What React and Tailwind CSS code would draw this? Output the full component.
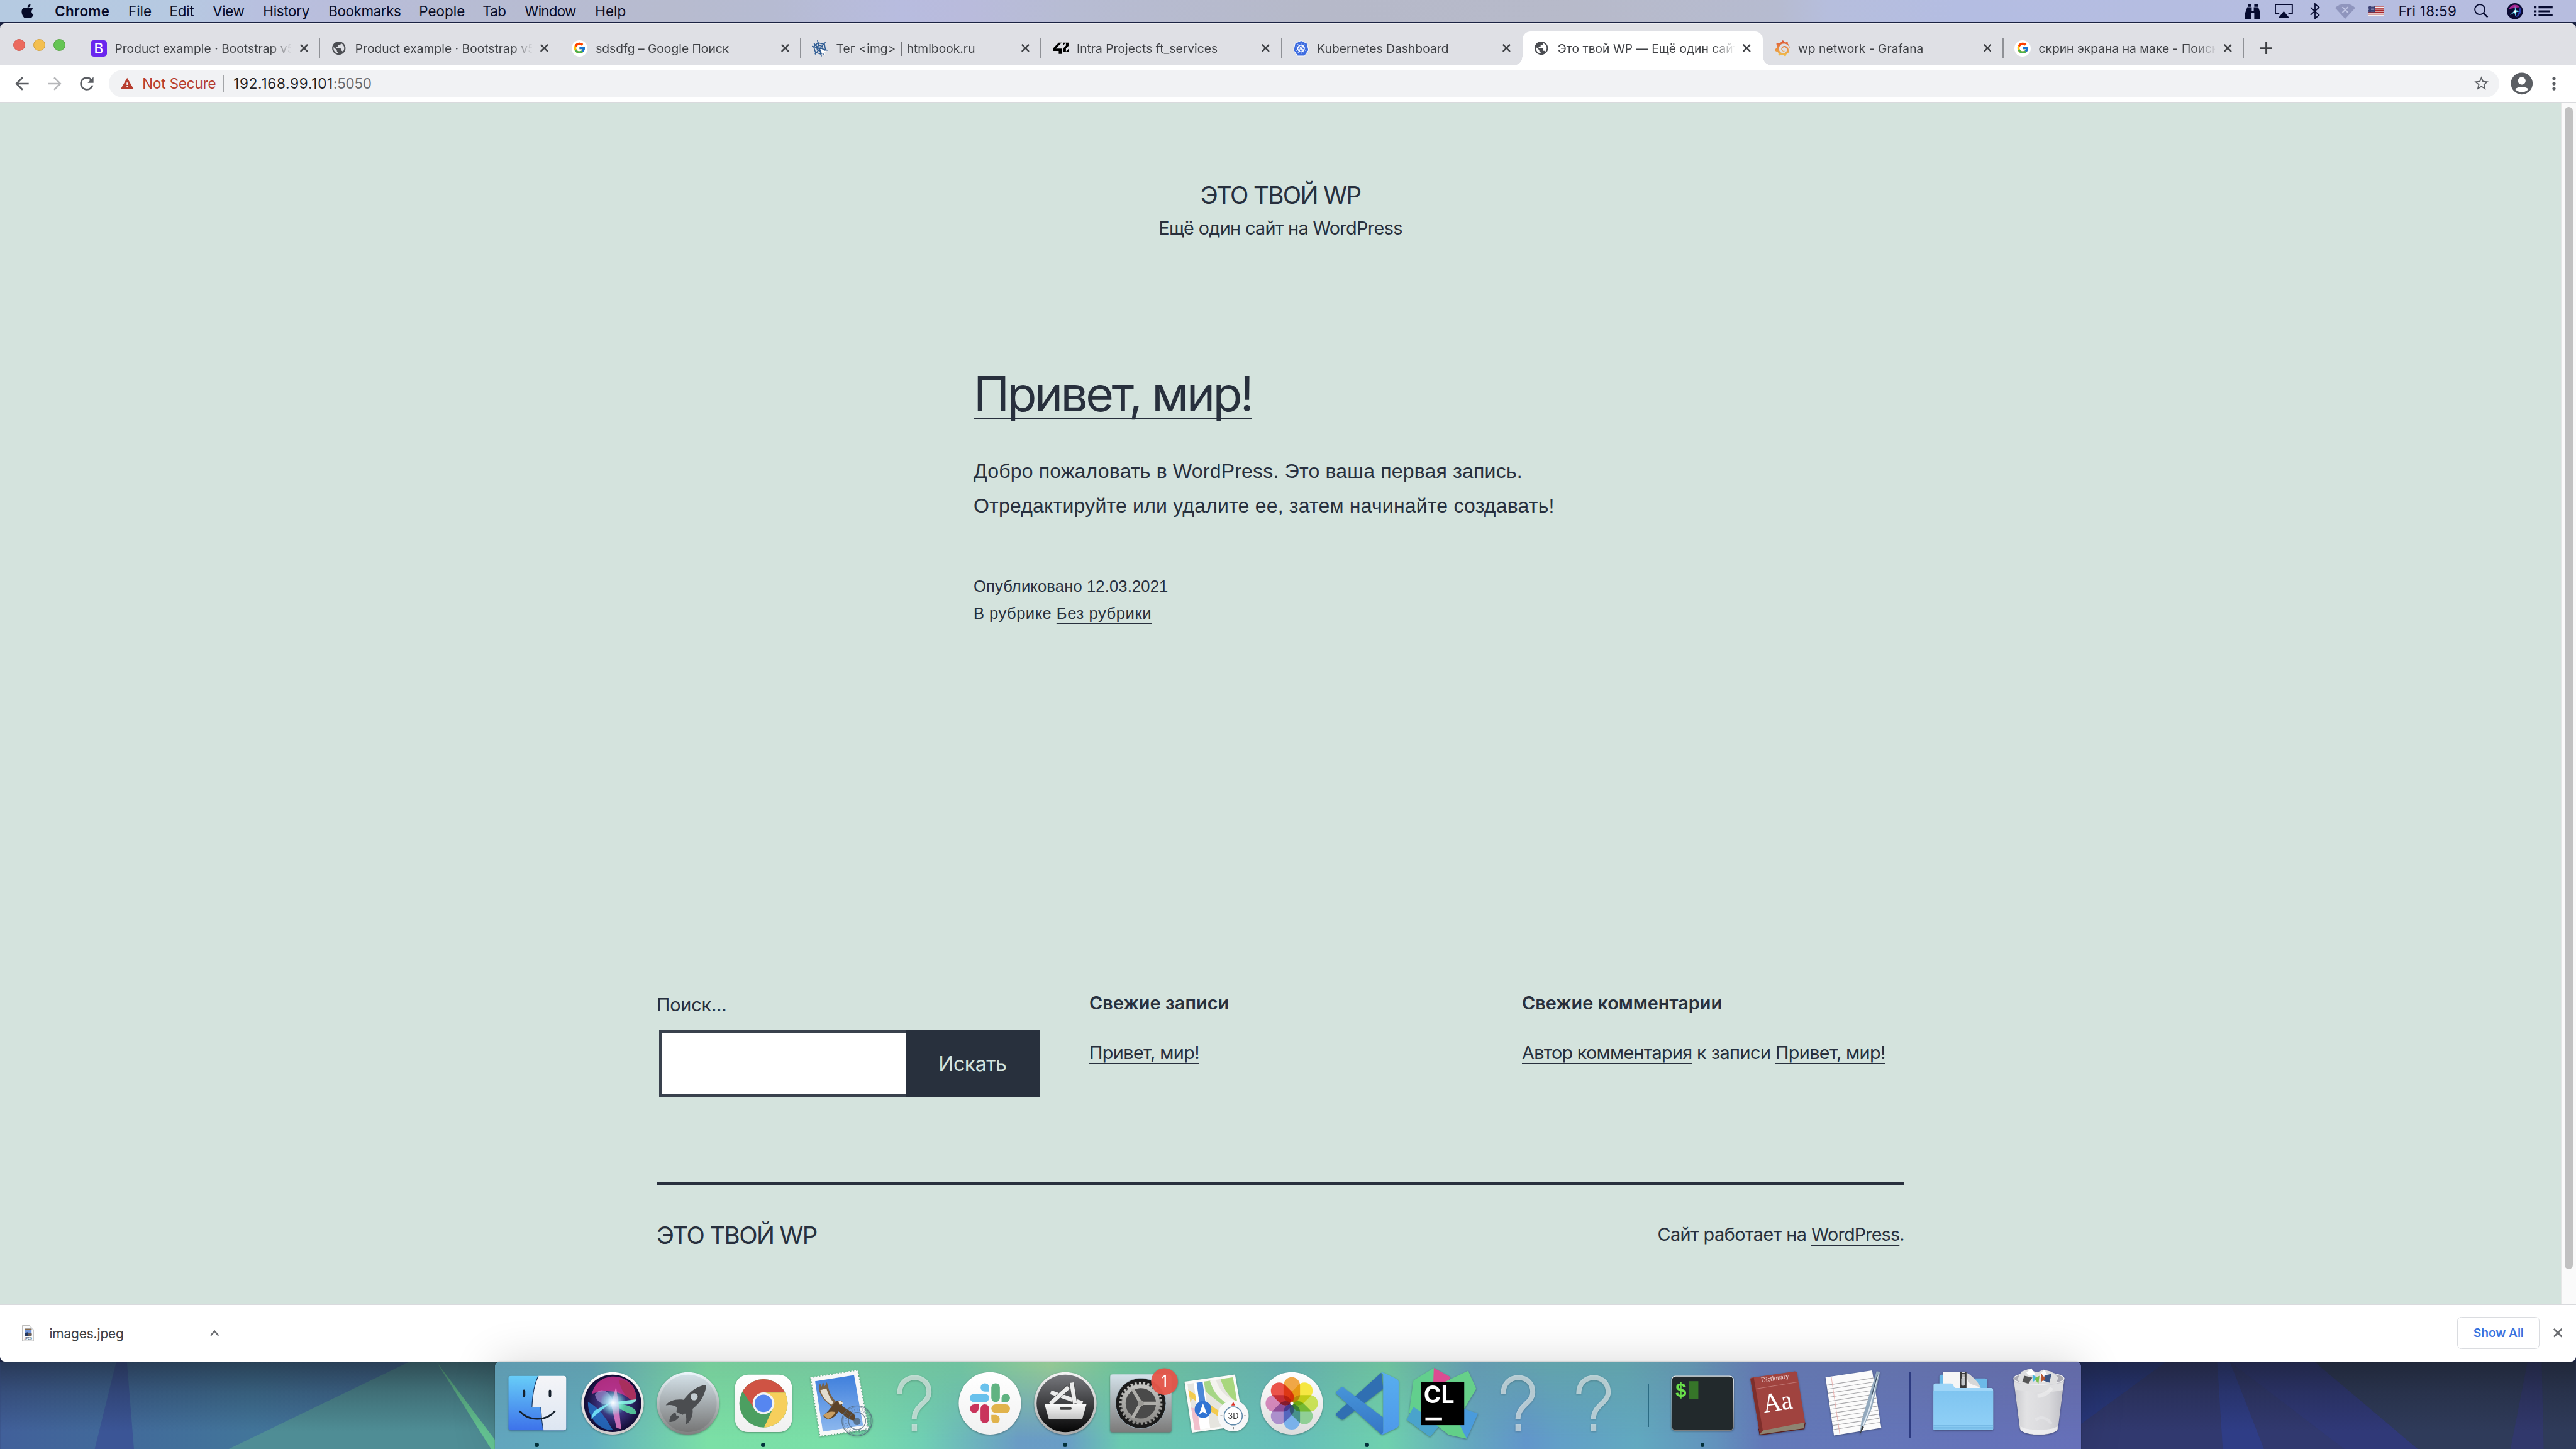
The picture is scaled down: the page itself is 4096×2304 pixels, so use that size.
import React from "react";
import { FaApple } from "react-icons/fa";
import { FcGoogle } from "react-icons/fc";
import { SiKubernetes, SiGrafana, Si42 } from "react-icons/si";
import {
  MdPublic,
  MdWarning,
  MdStarBorder,
  MdAccountCircle,
  MdMoreVert,
  MdArrowBack,
  MdArrowForward,
  MdRefresh,
} from "react-icons/md";

/* ---------- menu bar ---------- */

const MENUS = [
  ["Chrome", "w-[73px] font-semibold tracking-[0.01em]"],
  ["File", "w-[41px]"],
  ["Edit", "w-[43px] tracking-[-0.01em]"],
  ["View", "w-[50px] tracking-[-0.02em]"],
  ["History", "w-[65px] tracking-[-0.014em]"],
  ["Bookmarks", "w-[90px] tracking-[-0.019em]"],
  ["People", "w-[63px]"],
  ["Tab", "w-[42px] tracking-[-0.03em]"],
  ["Window", "w-[70px] tracking-[-0.034em]"],
  ["Help", "w-[40px]"],
];

function SiriOrb({ className }) {
  return (
    <svg viewBox="0 0 16 16" className={className}>
      <circle cx="8" cy="8" r="8" fill="#0c0b33" />
      <path d="M2 6C4 1 10 0 13 4C10 4 6 5 2 6z" fill="#a3228f" />
      <path d="M13 4C16 8 13 13 9 14C12 10 12 7 13 4z" fill="#2a3fb0" />
      <path d="M3 12L8 7L8 2L9 7L14 8L9 9L9 14L7.5 9.5z" fill="#6fe3f5" />
      <circle cx="8.3" cy="8.2" r="1.2" fill="#fff" />
    </svg>
  );
}

function MenuBar() {
  return (
    <header className="flex h-[22px] items-center bg-[linear-gradient(to_right,#b5cae1_0%,#b6c9e1_7%,#b8c0df_10%,#b9bddb_13.5%,#b7bcd4_17%,#b7bbcf_26%,#b6bbd2_30%,#b8bcdf_35%,#b9bbdc_37.5%,#b7bcd3_41.5%,#b6b9c9_51%,#b7baca_61%,#b6bbd0_69%,#b6bedd_71%,#b4bde2_76%,#b7bddf_100%)] text-[14px] text-[#060b28]">
      <FaApple className="ml-[19.5px] mr-[19px] size-[16px]" />
      {MENUS.map(([label, cls]) => (
        <span key={label} className={cls}>
          {label}
        </span>
      ))}
      <div className="ml-auto mr-[23px] flex shrink-0 items-center text-[#060b30]">
        <svg viewBox="0 0 15 15" className="h-[15px] w-[15px] shrink-0" fill="currentColor">
          <path d="M2.5 0h3.5v3h-3.5zM9 0h3.5v3h-3.5zM2 3.4h4.5v4H8.500v-4H13L15 9v6H9V9H6v6H0V9z" />
        </svg>
        <svg viewBox="0 0 18 14" className="ml-[14.5px] h-[14px] w-[18px] shrink-0">
          <path d="M4.500 9.500H.6V.6h16.800v8.900H13.500" fill="none" stroke="currentColor" strokeWidth="1.200" />
          <path d="M9 7.300L14.500 14h-11z" fill="currentColor" />
        </svg>
        <svg viewBox="0 0 10 16" className="ml-[17px] h-[16px] w-[10px] shrink-0" fill="none" stroke="currentColor" strokeWidth="1.100">
          <path d="M.6 4.200L9 11.800L5 15.300V.7L9 4.200L.6 11.800" />
        </svg>
        <svg viewBox="0 0 20 15" className="ml-[15px] h-[15px] w-[20px] shrink-0">
          <path d="M0 4C5.500-1.300 14.500-1.300 20 4L10 15z" fill="#8f95bd" />
          <path d="M7.200 3.200l5.600 5.600M12.800 3.200L7.200 8.800" stroke="#c3c8e6" strokeWidth="1.300" />
        </svg>
        <svg viewBox="0 0 16 11" className="ml-[12.500px] h-[11px] w-[16px] shrink-0">
          <rect width="16" height="11" fill="#f4f0f0" />
          {[0, 2, 4, 6, 8, 10].map((y) => (
            <rect key={y} y={y} width="16" height="1" fill="#a8262c" />
          ))}
          <rect width="7.500" height="6.500" fill="#3b3f74" />
          {[1, 2.500, 4, 5.500].map((y) => (
            <path key={y} d={`M.8 ${y}h6.200`} stroke="#c9cbe0" strokeWidth=".4" strokeDasharray=".5 .7" />
          ))}
        </svg>
        <span className="ml-[14.500px] w-[57px] shrink-0 whitespace-nowrap tracking-[0.012em]">Fri 18:59</span>
        <svg viewBox="0 0 14 14" className="ml-[18.500px] size-[14px] shrink-0" fill="none" stroke="currentColor">
          <circle cx="5.700" cy="5.700" r="5" strokeWidth="1.200" />
          <path d="M9.300 9.300L13.400 13.400" strokeWidth="1.500" />
        </svg>
        <SiriOrb className="ml-[18px] size-[16px] shrink-0" />
        <svg viewBox="0 0 18 10" className="ml-[12px] h-[10px] w-[18px] shrink-0" fill="currentColor">
          <path d="M0 0h2v2H0zM4 0h14v2H4zM0 4h2v2H0zM4 4h11v2H4zM0 8h2v2H0zM4 8h14v2H4z" />
        </svg>
      </div>
    </header>
  );
}

/* ---------- browser tabs ---------- */

function BootstrapIcon() {
  return (
    <span className="flex size-[16px] items-center justify-center rounded-[3px] bg-[#6a26ee] text-[14px] font-medium leading-none text-white">
      B
    </span>
  );
}

function GoogleIcon() {
  return (
    <span className="flex size-[16px] items-center justify-center rounded-full bg-white">
      <FcGoogle className="size-[13px]" />
    </span>
  );
}

function WebIcon() {
  return (
    <svg viewBox="0 0 16 16" className="size-[16px]" fill="none" stroke="#2f5c93" strokeWidth="1">
      <path d="M5.500 0L9.500 16M0 6L15.500 10M13.500 2L3 14M2 3L12 14" />
      <path d="M6 2.500L12.500 4L13.500 9.500L9 13.800L3.500 12L1.800 6.500z" />
      <path d="M6.800 5L10.500 6L11 8.700L8.500 10.800L5.500 9.800L4.600 7z" />
      <path d="M9 8.500l5.500 2.700l-2 .6l.8 2.200l-1.300.4l-.8-2l-1.400 1z" fill="#fff" stroke="none" />
    </svg>
  );
}

function KubeIcon() {
  return (
    <svg viewBox="0 0 16 16" className="size-[16px]">
      <path d="M8 .3L14 3.200L15.500 9.800L11.500 15.600H4.500L.5 9.800L2 3.200z" fill="#3f6de0" stroke="#fff" strokeWidth=".6" />
      <g stroke="#fff" fill="none" strokeWidth=".9">
        <circle cx="8" cy="8.200" r="3.300" />
        <path d="M8 2.700v11M3 6.300l10 4M13 6.300l-10 4M4.700 12.800l6.600-9M11.300 12.800l-6.600-9" strokeWidth=".6" />
      </g>
    </svg>
  );
}

function GrafanaIcon() {
  return (
    <>
      <svg className="absolute size-0">
        <linearGradient id="grafana" x1="0" y1="0" x2="0" y2="1">
          <stop offset="0" stopColor="#dd5335" />
          <stop offset="1" stopColor="#f2c44f" />
        </linearGradient>
      </svg>
      <SiGrafana className="size-[16px]" fill="url(#grafana)" />
    </>
  );
}

const TABS = [
  { icon: <BootstrapIcon />, title: "Product example · Bootstrap v5.0" },
  { icon: <MdPublic className="size-[17px] text-[#4b4d52]" />, title: "Product example · Bootstrap v5.0" },
  { icon: <GoogleIcon />, title: "sdsdfg – Google Поиск" },
  { icon: <WebIcon />, title: "Тег <img> | htmlbook.ru" },
  { icon: <Si42 className="size-[16px] text-black" />, title: "Intra Projects ft_services" },
  { icon: <KubeIcon />, title: "Kubernetes Dashboard", plain: true },
  { icon: <MdPublic className="size-[17px] text-[#4b4d52]" />, title: "Это твой WP — Ещё один сайт", active: true },
  { icon: <GrafanaIcon />, title: "wp network - Grafana" },
  { icon: <GoogleIcon />, title: "скрин экрана на маке - Поиск" },
];

function Cross({ className }) {
  return (
    <svg viewBox="0 0 8 8" className={className} fill="none" stroke="currentColor" strokeWidth="1.500">
      <path d="M.5.5L7.500 7.500M7.500.5L.5 7.500" />
    </svg>
  );
}

function Tab({ icon, title, active, plain }) {
  return (
    <div
      className={
        active
          ? "relative flex h-[34px] w-[239px] items-center rounded-t-[8px] bg-white pl-[11px]"
          : "flex h-[34px] w-[239px] items-center pl-[11px]"
      }
    >
      {active && (
        <>
          <i className="absolute bottom-0 left-[-8px] size-[8px] bg-[radial-gradient(circle_at_0_0,#dfe0e5_7.500px,#fff_8px)]" />
          <i className="absolute bottom-0 right-[-8px] size-[8px] bg-[radial-gradient(circle_at_100%_0,#dfe0e5_7.500px,#fff_8px)]" />
        </>
      )}
      <span className="flex w-[16px] shrink-0 justify-center">{icon}</span>
      <span className="ml-[8px] w-[175.500px] overflow-hidden whitespace-nowrap pt-px text-[12px] leading-[16px] tracking-[0.002em] text-[#3f4145] [mask-image:linear-gradient(to_right,black_154px,transparent_177px)]">
        {title}
      </span>
      <Cross className="ml-[8.500px] size-[8px] text-[#3f4145]" />
      {!active && !plain && <i className="ml-auto h-[20px] w-px bg-[#8f9196]" />}
    </div>
  );
}

function TabStrip() {
  return (
    <div className="flex h-[42px] items-end rounded-t-[5px] border-t border-[#ededf0] bg-[#dfe0e5]">
      <div className="flex h-[34px] w-[79px] items-start gap-[8px] pl-[13px] pt-[7.500px]">
        <i className="size-[12px] rounded-full border-[0.500px] border-[#d05a50] bg-[#eb6a5e]" />
        <i className="size-[12px] rounded-full border-[0.500px] border-[#d3a13e] bg-[#f3bf4f]" />
        <i className="size-[12px] rounded-full border-[0.500px] border-[#57a544] bg-[#65c554]" />
      </div>
      {TABS.map((t, i) => (
        <Tab key={i} {...t} />
      ))}
      <div className="flex h-[34px] items-center pl-[16px]">
        <svg viewBox="0 0 12 12" className="size-[12px]" stroke="#3c3e42" strokeWidth="1.800">
          <path d="M6 0v12M0 6h12" />
        </svg>
      </div>
    </div>
  );
}

function Toolbar() {
  return (
    <div className="flex h-[37px] items-center border-b border-[#d9dadd] bg-white pl-[12px] text-[#5b5e63]">
      <MdArrowBack className="size-[20px]" />
      <MdArrowForward className="ml-[12.500px] size-[20px] text-[#b6b7ba]" />
      <MdRefresh className="ml-[11.500px] size-[20px]" />
      <div className="ml-[12px] flex h-[28px] w-[2376px] items-center rounded-full bg-[#f1f2f4] text-[14px]">
        <MdWarning className="ml-[11.500px] size-[14px] text-[#b73d2e]" />
        <span className="ml-[8px] w-[80px] tracking-[-0.006em] text-[#b73d2e]">Not Secure</span>
        <i className="h-[16px] w-px bg-[#a3a5a8]" />
        <span className="ml-[9.500px] tracking-[0.035em] text-[#1f2024]">192.168.99.101</span>
        <span className="tracking-[-0.01em] text-[#686b70]">:5050</span>
        <MdStarBorder className="ml-auto mr-[9.500px] size-[17px]" />
      </div>
      <MdAccountCircle className="ml-[9px] size-[26px]" />
      <MdMoreVert className="ml-[9px] size-[20px]" />
    </div>
  );
}

/* ---------- page ---------- */

function Link({ children, className = "" }) {
  return (
    <a
      className={`underline decoration-[1px] underline-offset-[4px] [text-decoration-skip-ink:none] ${className}`}
    >
      {children}
    </a>
  );
}

function Page() {
  return (
    <div className="flex h-[1194px] bg-[#d4e3dd] text-[#28303d]">
      <main className="flex flex-1 flex-col items-center pt-[74px]">
        <h1 className="text-[24px] leading-[36px] tracking-[-0.041em]">ЭТО ТВОЙ WP</h1>
        <p className="text-[18px] leading-[30px] tracking-[-0.0225em]">Ещё один сайт на WordPress</p>

        <article className="mt-[118.500px] w-[610px]">
          <h2 className="text-[48px] leading-[62px] tracking-[-0.0475em]">
            <a className="underline decoration-[1.500px] underline-offset-[7px] [text-decoration-skip-ink:none]">
              Привет, мир!
            </a>
          </h2>
          <p className="mt-[29px] whitespace-nowrap font-['Liberation_Sans',sans-serif] text-[20px] leading-[34px] tracking-[0.0062em]">
            Добро пожаловать в WordPress. Это ваша первая запись.
            <br />
            Отредактируйте или удалите ее, затем начинайте создавать!
          </p>
          <div className="mt-[49.700px] font-['Liberation_Sans',sans-serif] text-[16px] leading-[27.250px] tracking-[0.005em]">
            <p>Опубликовано 12.03.2021</p>
            <p className="tracking-[0.018em]">
              В рубрике <Link className="tracking-[0.022em]">Без рубрики</Link>
            </p>
          </div>
        </article>

        <footer className="mt-[357px] w-[1240px] text-[18px]">
          <div className="flex h-[194.500px] gap-[50px]">
            <div className="w-[380px]">
              <p className="mt-[3.200px] leading-[30px] tracking-[-0.006em]">Поиск...</p>
              <div className="ml-[2.500px] mt-[10px] flex h-[66px] w-[378px]">
                <div className="flex-1 border-[3px] border-r-0 border-[#39414d] bg-white" />
                <button className="w-[133px] bg-[#28303d] pt-[1px] text-[20px] tracking-[-0.014em] text-[#d4e3dd]">Искать</button>
              </div>
            </div>
            <div className="w-[380px]">
              <h3 className="mt-[1.500px] font-semibold leading-[30px] tracking-[0.003em]">Свежие записи</h3>
              <p className="mt-[19px] leading-[30px]">
                <Link className="tracking-[-0.021em]">Привет, мир!</Link>
              </p>
            </div>
            <div className="w-[380px] whitespace-nowrap">
              <h3 className="mt-[1.500px] font-semibold leading-[30px]">Свежие комментарии</h3>
              <p className="mt-[19px] leading-[30px] tracking-[-0.018em]">
                <Link className="tracking-[-0.025em]">Автор комментария</Link> к записи{" "}
                <Link className="tracking-[-0.022em]">Привет, мир!</Link>
              </p>
            </div>
          </div>
          <div className="flex justify-between border-t-[3px] border-[#28303d] pt-[32.500px]">
            <p className="text-[24px] leading-[36px] tracking-[-0.041em]">ЭТО ТВОЙ WP</p>
            <p className="leading-[34px] tracking-[-0.018em]">
              Сайт работает на <Link className="tracking-[-0.0304em]">WordPress</Link>.
            </p>
          </div>
        </footer>
      </main>
      <aside className="w-[15px] border-l border-[#e6e6e6] bg-[#fafafa] pl-[3px] pt-[4px]">
        <div className="h-[1155px] w-[8px] rounded-full bg-[#c1c1c1]" />
      </aside>
    </div>
  );
}

/* ---------- download shelf ---------- */

function JpegIcon() {
  return (
    <svg viewBox="0 0 12 16" className="h-[16px] w-[12px]">
      <path d="M.3.3H7.500L11.700 4.700V15.700H.3z" fill="#fbfbfb" stroke="#b9b9b9" strokeWidth=".6" />
      <path d="M7.500.3V4.700H11.700z" fill="#dcdcdc" />
      <rect x="2.500" y="3.500" width="7" height="7.500" fill="#6f93d8" />
      <path d="M2.500 3.500h7v1.500h-7z" fill="#8a6a45" />
      <path d="M2.500 11V8l3-1l4 4z" fill="#20355f" />
      <circle cx="8" cy="9.300" r="1.800" fill="#6b5d55" />
      <text x="6" y="14.600" fontSize="3" textAnchor="middle" fill="#444">
        JPEG
      </text>
    </svg>
  );
}

function Shelf() {
  return (
    <div className="flex h-[57px] items-center rounded-b-[5px] border-t border-[#d9dadd] bg-white pl-[22px]">
      <JpegIcon />
      <span className="ml-[15px] w-[159.500px] pt-[1.500px] text-[13px] tracking-[-0.0045em] text-[#3c4043]">images.jpeg</span>
      <svg viewBox="0 0 9 6" className="h-[6px] w-[9px]" fill="none" stroke="#6a6c70" strokeWidth="1.500">
        <path d="M.6 5.400L4.500 1L8.400 5.400" />
      </svg>
      <i className="ml-[18.500px] h-[44px] w-px bg-[#c8c9cb]" />
      <button className="ml-auto h-[32px] w-[82px] rounded-[4px] border border-[#dadce0] text-[12px] font-semibold tracking-[-0.004em] text-[#3a73df]">
        Show All
      </button>
      <Cross className="ml-[13.500px] mr-[13.500px] size-[9px] text-[#6a6c70]" />
    </div>
  );
}

/* ---------- desktop behind the dock ---------- */

function Wallpaper() {
  return (
    <svg viewBox="0 0 2560 87" className="absolute bottom-0 left-0 h-[87px] w-[2560px]">
      <defs>
        <linearGradient id="wpShade" x1="0" y1="0" x2="0" y2="1">
          <stop offset="0" stopColor="#14171f" stopOpacity=".55" />
          <stop offset=".35" stopColor="#14171f" stopOpacity=".25" />
          <stop offset=".8" stopColor="#14171f" stopOpacity="0" />
        </linearGradient>
        <linearGradient id="wpLeft" x1="0" y1="0" x2="1" y2="0">
          <stop offset="0" stopColor="#41609a" />
          <stop offset=".5" stopColor="#42759a" />
          <stop offset="1" stopColor="#466a9a" />
        </linearGradient>
      </defs>
      <rect width="2560" height="87" fill="#31396f" />
      <rect width="500" height="87" fill="url(#wpLeft)" />
      <path d="M115.500 0H126L133 87H94z" fill="#3b5596" />
      <path d="M407 0H500V87H227z" fill="#4f8d95" />
      <path d="M433.500 0L492 78V87H488z" fill="#66c795" />
      <path d="M2060 0H2153L2060 68z" fill="#2a3a83" />
      <path d="M2203.500 0H2216L2250 87H2209z" fill="#2f3d86" />
      <path d="M2216 0H2300L2403 87H2330z" fill="#303978" />
      <path d="M2300 0H2560V87H2403z" fill="#2f3b5a" />
      <path d="M2512 0H2526L2528 87H2495z" fill="#31386c" />
      <rect width="2560" height="87" fill="url(#wpShade)" />
    </svg>
  );
}

/* ---------- dock icons ---------- */

function Ico({ children }) {
  return (
    <svg viewBox="0 0 75 87" className="h-[87px] w-[75px] shrink-0 drop-shadow-[0_1px_1px_rgba(0,0,0,0.350)]">
      {children}
    </svg>
  );
}

function Grad({ id, from, to }) {
  return (
    <linearGradient id={id} x1="0" y1="0" x2="0" y2="1">
      <stop offset="0" stopColor={from} />
      <stop offset="1" stopColor={to} />
    </linearGradient>
  );
}

const Finder = () => (
  <Ico>
    <Grad id="fa" from="#67cdf8" to="#3d72ea" />
    <Grad id="fb" from="#f5f5f8" to="#dde6f2" />
    <rect x="9" y="14.200" width="57.400" height="54.100" rx="2.500" fill="url(#fa)" />
    <path d="M38.700 14.200H64a2.400 2.400 0 0 1 2.400 2.400V65.900a2.400 2.400 0 0 1-2.400 2.400H43.600C42.300 61 41.500 53 41.200 45.300H32.400C32.800 33 34.500 23 38.700 14.200z" fill="url(#fb)" />
    <path d="M38.700 14.200C34.500 23 32.800 33 32.400 45.300H41.200C41.500 53 42.300 61 43.600 68.300" fill="none" stroke="#1b3a63" strokeWidth=".7" />
    <path d="M24.500 29v5M50.300 29v5" stroke="#15202c" strokeWidth="2.500" strokeLinecap="round" />
    <path d="M20.500 49.500C29 59.500 46.500 59.500 55 49.500" fill="none" stroke="#15202c" strokeWidth="1.700" strokeLinecap="round" />
  </Ico>
);

const Siri = () => (
  <Ico>
    <radialGradient id="sg">
      <stop offset="0" stopColor="#4a6fb4" />
      <stop offset=".55" stopColor="#352b72" />
      <stop offset="1" stopColor="#120c34" />
    </radialGradient>
    <radialGradient id="sw">
      <stop offset="0" stopColor="#fff" />
      <stop offset=".35" stopColor="#c8f2ff" stopOpacity=".8" />
      <stop offset="1" stopColor="#6fd" stopOpacity="0" />
    </radialGradient>
    <Grad id="sr" from="#ffffff" to="#cfcaca" />
    <circle cx="37.500" cy="41.500" r="31" fill="url(#sr)" />
    <circle cx="37.500" cy="41.500" r="28.500" fill="url(#sg)" />
    <path d="M17 32C22 11 48 10 58 25C64 37 60 42 56 38C46 29 30 27 17 32z" fill="#c8338c" opacity=".85" />
    <path d="M44 18C58 18 63 34 60 40C52 38 45 28 44 18z" fill="#a63054" opacity=".8" />
    <path d="M13 40C13 60 28 69 38 68C32 60 28 48 13 40z" fill="#2470c4" opacity=".85" />
    <path d="M20 33C27 22 38 33 38 42C30 44 22 42 20 33z" fill="#c7b4f2" opacity=".5" />
    <path d="M37.500 40.500L61 37.500C61 43 48 44 37.500 41z" fill="#8af7e6" opacity=".9" />
    <path d="M38 42C48 41 63 46 61 52C56 54 46 48 38 42z" fill="#5adaa2" opacity=".85" />
    <path d="M36 42L41 25L43.500 42L46 67L41.500 66z" fill="#f283cd" opacity=".8" />
    <path d="M38 39L16 57L19 49z" fill="#74e8f8" opacity=".9" />
    <circle cx="38" cy="41" r="13" fill="url(#sw)" />
  </Ico>
);

const Launchpad = () => (
  <Ico>
    <Grad id="la" from="#ecf6fb" to="#7f7f7f" />
    <Grad id="lb" from="#d3e0e7" to="#767676" />
    <circle cx="37.500" cy="41.500" r="31" fill="url(#la)" />
    <circle cx="37.500" cy="41.500" r="28.500" fill="url(#lb)" />
    <path d="M55.700 23C48 24 41 28.500 36 34.500L33 38C26 37 19 38.500 15.400 43.500C20 42.500 24 43.500 26.500 45.500L26 50L32 53L34.500 51.500C36 54 36.200 58.500 35.200 63C39.500 60 43 54 42 47C49 42 55 33 55.700 23z" fill="#4b4d50" />
    <circle cx="43.600" cy="35" r="3.900" fill="#c3ccd1" stroke="#333" strokeWidth=".5" />
    <path d="M25 50.500C20.500 52 19 56 19 60C23 60 27 58.500 28.500 54.500L26 54z" fill="#4b4d50" />
  </Ico>
);

const Chrome = () => (
  <Ico>
    <Grad id="ca" from="#ffffff" to="#f0f0f0" />
    <clipPath id="cc">
      <circle cx="37.500" cy="41.500" r="24" />
    </clipPath>
    <rect x="9.100" y="13" width="56.800" height="57" rx="13" fill="url(#ca)" />
    <g clipPath="url(#cc)">
      <rect x="13" y="17" width="49" height="49" fill="#4c9f61" />
      <path d="M16.700 29.500L10 10H65V30.800H37.500L28.200 46.800z" fill="#cf5344" />
      <path d="M37.500 30.800H65V70H36L46.800 46.800z" fill="#f6cf5c" />
    </g>
    <circle cx="37.500" cy="41.500" r="10.800" fill="#f3f3f3" />
    <circle cx="37.500" cy="41.500" r="8.700" fill="#5686f0" />
  </Ico>
);

const Mail = () => (
  <Ico>
    <Grad id="ma" from="#3f7fdc" to="#8db8ee" />
    <path d="M9.900 16.200L55.800 9L66.400 66.700L19 73.700z" fill="#f8f8f8" stroke="#f8f8f8" strokeWidth="1.600" strokeDasharray="1.700 1.400" />
    <path d="M13.800 19.500L52.500 13.500L61.500 63.500L21.500 69.500z" fill="url(#ma)" />
    <path d="M17.500 28L18.500 21.500L20.500 25L21.500 20L23.500 24.500L25.500 20.500L27.500 28C29 33 31 36 34.500 40L31 45C26 42 20 36 17.500 28z" fill="#7a6247" />
    <path d="M19 28.500L25 26.500C27 33 29 37 32 40.500L30 43C25 40 21 35 19 28.500z" fill="#e2dccf" />
    <path d="M33 41C36 38 39 38 41 40L40.500 44C44 47 50 49 53 53L54 58.500C50 59 46 57 42 53L37 49.500C35 54 31 56.500 26.500 57.500L21.500 54C25 51 28 48 30 45z" fill="#5c4329" />
    <path d="M22 53.500C26 50 29 49 34 50C32 54 29.500 56 26.500 57z" fill="#c99e62" />
    <path d="M37 39.500C39 38.500 41 39.500 41.500 42L38 43z" fill="#efe6d5" />
    <g fill="none" stroke="#52677c" strokeWidth=".9" opacity=".75">
      <circle cx="55.500" cy="59" r="15" />
      <circle cx="55.500" cy="59" r="13.800" strokeWidth=".4" />
      <circle cx="55.500" cy="59" r="8.500" />
      <circle cx="55.500" cy="59" r="11.300" strokeWidth="2.400" strokeDasharray=".8 1.700" opacity=".6" />
    </g>
    <ellipse cx="55.500" cy="59.500" rx="3.400" ry="3.700" fill="#52677c" opacity=".85" />
  </Ico>
);

const Question = () => (
  <Ico>
    <g opacity=".62">
      <path d="M22.700 32C22.700 22 29 15.900 37.700 15.900C46.500 15.900 52 22 52 30.500C52 41 37.300 43.500 37.300 57" fill="none" stroke="#f5f8f8" strokeWidth="5" />
      <rect x="34.800" y="62" width="5.300" height="7.200" fill="#f0f5f5" />
    </g>
  </Ico>
);

const Slack = () => (
  <Ico>
    <Grad id="sl" from="#ffffff" to="#f1f1f1" />
    <circle cx="37.500" cy="41.500" r="31" fill="url(#sl)" />
    <g fill="#69c1ec">
      <path d="M36.800 29.800h-4.300a4.300 4.150 0 1 1 4.300-4.150z" />
      <rect x="17.500" y="32" width="19.300" height="8.300" rx="4.150" />
    </g>
    <g fill="#60b381">
      <rect x="38.900" y="21.500" width="8.500" height="18.800" rx="4.200" />
      <path d="M49.100 40.300v-4.150a4.200 4.150 0 1 1 4.200 4.150z" />
    </g>
    <g fill="#c9345b">
      <path d="M26.300 42.500v4.200a4.300 4.200 0 1 1-4.300-4.200z" />
      <rect x="28.200" y="42.500" width="8.600" height="18.700" rx="4.200" />
    </g>
    <g fill="#e1b34c">
      <rect x="38.900" y="42.500" width="18.600" height="8.400" rx="4.200" />
      <path d="M38.900 53h4.200a4.200 4.150 0 1 1-4.200 4.150z" />
    </g>
  </Ico>
);

const AppCatalog = () => (
  <Ico>
    <Grad id="aa" from="#f4f4f4" to="#a9a9a9" />
    <Grad id="ab" from="#77787d" to="#050505" />
    <Grad id="ac" from="#fafafa" to="#c3c3c3" />
    <circle cx="37.500" cy="41.500" r="31" fill="url(#aa)" />
    <circle cx="37.500" cy="41.500" r="28.600" fill="url(#ab)" />
    <g stroke="#ececec" strokeWidth="4" fill="none">
      <path d="M23 30.500L54.500 41.500" />
      <path d="M22.500 42L40.500 25.500" stroke="#444" strokeWidth="5" />
      <path d="M22.500 42L40.500 25.500" />
      <path d="M43.700 21L47 41.500" stroke="#444" strokeWidth="5" />
      <path d="M43.700 21L47 41.500" />
    </g>
    <path d="M16.800 42.300H58.500L54.300 57H21z" fill="url(#ac)" />
    <rect x="31.900" y="45.400" width="11.800" height="2.500" rx="1.200" fill="#444" />
  </Ico>
);

const Settings = () => (
  <Ico>
    <Grad id="ga" from="#d4e2ea" to="#7b7a79" />
    <Grad id="gb" from="#c3c3c0" to="#8f8e8b" />
    <rect x="7" y="12.700" width="61" height="57.600" rx="2.500" fill="url(#ga)" />
    <circle cx="37.500" cy="41.500" r="25" fill="#1b1b1b" stroke="#9fb1bd" strokeWidth=".6" />
    <circle cx="37.500" cy="41.500" r="20" fill="#4a4a4a" stroke="url(#gb)" strokeWidth="3" strokeDasharray="2.100 2.090" />
    <circle cx="37.500" cy="41.500" r="17" fill="none" stroke="url(#gb)" strokeWidth="3.800" />
    <g stroke="#aeada9" strokeWidth="3.200">
      <path d="M37.500 41.500H54M37.500 41.500L29.300 27.200M37.500 41.500L29.300 55.800" />
    </g>
    <circle cx="37.500" cy="41.500" r="3" fill="#9a9995" />
    <circle cx="61" cy="19.800" r="13.300" fill="#e5564a" fillOpacity=".96" />
    <text x="60.700" y="25.200" fontSize="15.500" textAnchor="middle" fill="#fff">
      1
    </text>
  </Ico>
);

const Maps = () => (
  <Ico>
    <clipPath id="mp">
      <path d="M8.800 22.300L54 15.700L62 62L16 68.200z" />
    </clipPath>
    <path d="M5.900 20L56.100 12.800L65 63.500L13.300 70.700z" fill="#fafaf8" />
    <g clipPath="url(#mp)">
      <rect width="75" height="87" fill="#e6e5df" />
      <path d="M40 10H70V45C56 42 44 32 40 10z" fill="#a9d77e" />
      <path d="M27 30L60 56V44C44 40 34 30 30 12L24 14z" fill="#9fd47c" opacity=".9" />
      <path d="M33 14C36 30 46 40 62 44" fill="none" stroke="#f4f3ee" strokeWidth="6" />
      <path d="M5 44L22 48V75H5z" fill="#f1bfcb" />
      <path d="M0 24L14 36L8 48z" fill="#e9d27d" />
      <path d="M4 27L60 66" stroke="#f3cb4f" strokeWidth="5" />
      <path d="M19 14L28 78" stroke="#fff" strokeWidth="10" />
      <path d="M20 14L25.500 54" stroke="#4a86d8" strokeWidth="6" />
    </g>
    <circle cx="24.300" cy="47.500" r="8.300" fill="#3174d3" />
    <path d="M24.300 41.500L28.300 52.500L24.300 50L20.300 52.500z" fill="#fff" />
    <circle cx="54.300" cy="54" r="15.400" fill="#f6f7f8" />
    <circle cx="54.300" cy="54" r="9" fill="#fff" stroke="#5d87a8" strokeWidth="1" />
    <path d="M54.300 40L56.200 43.600H52.400z" fill="#d9352a" />
    <path d="M41.500 54h2M65 54h2M54.300 65v2" stroke="#333" strokeWidth=".8" />
    <text x="54.300" y="57" fontSize="8" textAnchor="middle" fill="#333">
      3D
    </text>
  </Ico>
);

const PETALS = ["#efa23c", "#f6e638", "#c6df4e", "#8bcd90", "#74aeea", "#a98bca", "#d182b6", "#ea4a40"];
const Photos = () => (
  <Ico>
    <Grad id="pa" from="#ffffff" to="#dcdcdc" />
    <circle cx="37.500" cy="41.500" r="31" fill="url(#pa)" />
    <g className="isolate">
      {PETALS.map((c, i) => (
        <rect key={c} x="29.300" y="15.500" width="16.400" height="25.500" rx="8.200" fill={c} fillOpacity=".95" className="mix-blend-multiply" transform={`rotate(${i * 45} 37.500 41.500)`} />
      ))}
    </g>
    <circle cx="37.500" cy="41.500" r="1.600" fill="#fff" />
  </Ico>
);

const VSCode = () => (
  <Ico>
    <Grad id="va" from="#58aeee" to="#4e99ea" />
    <Grad id="vb" from="#4794d8" to="#3576c6" />
    <path d="M51.500 11L6.900 51.200C6.300 52 6.300 53 6.900 53.700L11.500 57.400C12.300 58 13.200 57.900 14 57.300L53.300 27z" fill="#306fb2" />
    <path d="M14 25.800C13.200 25.200 12.300 25.200 11.500 25.800L6.900 29.800C6.300 30.500 6.300 31.500 6.900 32.200L51 72L53.300 72.300V55.500z" fill="url(#vb)" />
    <path d="M51.200 11C52 10.600 53 10.700 54 11.100L66.800 17.300C68 18 68.700 19 68.700 20.300V62.800C68.700 64 68 65.200 66.800 65.800L54 72C53 72.400 52 72.400 51 72C52.500 72 53.300 71 53.300 69.500V13.500C53.300 12 52.500 11.200 51.200 11z" fill="url(#va)" />
  </Ico>
);

const CLion = () => (
  <Ico>
    <path d="M8.400 18.700L28.700 6.200L30 40L16 64L4.200 50.300z" fill="#62cf8d" />
    <path d="M28.700 6.200L45.200 15.300L41 24H28z" fill="#dd4c92" />
    <path d="M40 20L62.800 9L70.800 27L58.900 47L45 44z" fill="#66d089" />
    <path d="M1.700 57.800L8.400 45L34.700 63.200L24.900 74.800z" fill="#4aa3cc" />
    <path d="M31.200 63.200L43.500 72.800L61.400 76.700L64 58L50 55z" fill="#62cf88" />
    <path d="M58.900 47L72.500 51.700L61.400 76.700L54 62z" fill="#4a9bdc" />
    <rect x="15.800" y="20" width="43.100" height="43.200" fill="#000" />
    <text x="18.600" y="41.500" fontSize="23.500" fontWeight="700" fill="#fff" textLength="30.500" lengthAdjust="spacingAndGlyphs">
      CL
    </text>
    <rect x="20.300" y="55.500" width="16.500" height="2.900" fill="#fff" />
  </Ico>
);

const Terminal = () => (
  <Ico>
    <Grad id="ta" from="#e9eef0" to="#7d7d7d" />
    <rect x="6.600" y="14" width="62.100" height="54.800" rx="4" fill="url(#ta)" />
    <rect x="7.400" y="14.800" width="60.500" height="53.300" rx="3.400" fill="#22292c" />
    <text x="10.300" y="35" fontSize="19.500" fontWeight="700" fill="#6be24b" className="font-['Liberation_Mono',monospace]">
      $
    </text>
    <rect x="24.200" y="19.500" width="9.200" height="18" fill="#367529" />
  </Ico>
);

const Dictionary = () => (
  <Ico>
    <path d="M18.500 67L62.500 59L64.500 61L63.500 66.700L19.600 72.800z" fill="#8d8471" stroke="#5c1e1c" strokeWidth=".8" />
    <path d="M10.100 17.500C10.100 16.500 10.600 16.100 11.500 16L53.500 9.800C55 9.600 56.200 10.200 56.500 11.500L64.500 60.500L19.200 69z" fill="#a0433f" />
    <path d="M10.100 17L13.500 16L22.500 68.500L19.600 72z" fill="#7e2f2c" />
    <path d="M14.800 27.300L57.800 20.200" stroke="#c98582" strokeWidth=".5" />
    <g transform="matrix(.985 -.150 .160 .985 0 0)" fill="#fff" className="font-['Liberation_Serif',serif]">
      <text x="17.500" y="23.800" fontSize="7.200" textLength="28" lengthAdjust="spacingAndGlyphs" fill="#f0dcdb">
        Dictionary
      </text>
      <text x="15.500" y="54" fontSize="27" textLength="29.500" lengthAdjust="spacingAndGlyphs">
        Aa
      </text>
    </g>
  </Ico>
);

const TextEdit = () => (
  <Ico>
    <path d="M9.800 15.700L56.100 8.700L65.200 65.800L18.200 73.500z" fill="#fbfbfb" />
    <g stroke="#a9a9ac" strokeWidth=".7">
      {Array.from({ length: 12 }, (_, i) => (
        <path key={i} d={`M${10.900 + i * 0.620} ${23.500 + i * 4}L${57.200 + i * 0.620} ${16.300 + i * 4}`} />
      ))}
    </g>
    <path d="M15.500 15L24 72.500" stroke="#e9a2a0" strokeWidth=".5" />
    <path d="M60.500 9.500L64 10.200L56 46L49.500 61L43.700 72.800L45.500 59L53 34z" fill="#93a9bd" />
    <path d="M62 13L53.500 47L47 64" fill="none" stroke="#dfe9f2" strokeWidth="1.200" />
    <path d="M61.500 13L56 33" stroke="#3f5266" strokeWidth=".9" />
    <path d="M46 64L43.700 72.800L48 65z" fill="#333" />
  </Ico>
);

const Folder = () => (
  <Ico>
    <Grad id="fo" from="#7fc4f0" to="#91d1f7" />
    <path d="M13.600 15a2 2 0 0 1 2-2H30l2 3.700H59a2 2 0 0 1 2 2V30H13.600z" fill="#6cb9e8" />
    <path d="M17 10.300H38.500C45 12 51 20 54 26.500H17z" fill="#f6f6f6" />
    <path d="M37 10.300C45 12 51 19 55 26L44 22z" fill="#d7d7d7" />
    <rect x="34" y="10.300" width="6.500" height="17" fill="#3a3a3a" />
    <path d="M37.200 10.300v7" stroke="#ddd" strokeWidth="3" strokeDasharray=".9 .9" />
    <rect x="35.300" y="16" width="3.800" height="8" rx="1.700" fill="#c2c6c9" />
    <path d="M7.700 23.700a2 2 0 0 1 2-2H25.500C27.500 21.700 27.500 26.200 30 26.200H65a2 2 0 0 1 2 2V66.500a1.700 1.700 0 0 1-1.700 1.700H9.400a1.700 1.700 0 0 1-1.700-1.700z" fill="#9fd6f8" />
    <path d="M7.700 29H67V66.500a1.700 1.700 0 0 1-1.700 1.700H9.400a1.700 1.700 0 0 1-1.700-1.700z" fill="url(#fo)" />
    <path d="M7.700 63.500H67M7.700 65.200H67M7.700 66.800H67" stroke="#6db3df" strokeWidth=".5" />
  </Ico>
);

const Trash = () => (
  <Ico>
    <linearGradient id="tr" x1="0" y1="0" x2="1" y2="0">
      <stop offset="0" stopColor="#c9c9cd" />
      <stop offset=".25" stopColor="#e2e2e4" />
      <stop offset=".7" stopColor="#d8d8db" />
      <stop offset="1" stopColor="#bdbdc4" />
    </linearGradient>
    <path d="M12.300 17L18.500 66C19.500 75 55.500 75 56.500 66L62.700 17z" fill="url(#tr)" />
    <ellipse cx="37.500" cy="16.800" rx="25" ry="6" fill="#a9a9b2" stroke="#ececef" strokeWidth=".9" />
    <path d="M16 18L20 10L28 7L35 11L42 8L50 10L57 16L54 22H20z" fill="#dededf" />
    <path d="M23 14L31 16L27 22L21 20z" fill="#555" />
    <path d="M31 13L36 16L32 20z" fill="#49b9e0" />
    <path d="M33 17L38 14L37 22z" fill="#7bbf4d" />
    <path d="M38 13L43 8L48 18L41 21z" fill="#fafafa" />
    <path d="M43 14L50 12L48 21L42 19z" fill="#3b5482" />
    <path d="M40 12L44 17L40 20z" fill="#b5532f" />
    <path d="M25 11L30 6.500L34 13L28 14z" fill="#fff" />
    <path d="M12.700 19C16 25 59 25 62.300 19L61.300 28C50 32 30 30 14 28z" fill="#dfdfe1" />
    <path d="M36 34C42 34 48 30 50 26" stroke="#f3f3f4" strokeWidth="4" fill="none" opacity=".5" />
    <path d="M34 58C40 54 46 56 50 62" stroke="#f3f3f4" strokeWidth="3" fill="none" opacity=".3" />
    <path d="M19 64C24 69 51 69 56 64L55.500 68C51 73.500 24 73.500 19.500 68z" fill="#f4f4f5" opacity=".7" />
  </Ico>
);

const APPS = [
  [Finder, true],
  [Siri],
  [Launchpad],
  [Chrome, true],
  [Mail],
  [Question],
  [Slack],
  [AppCatalog, true],
  [Settings],
  [Maps],
  [Photos],
  [VSCode, true],
  [CLion],
  [Question],
  [Question],
];
const TOOLS = [[Terminal, true], [Dictionary], [TextEdit]];
const PLACES = [[Folder], [Trash]];

function DockGroup({ items }) {
  return items.map(([Icon, running], i) => (
    <div key={i} className="relative h-[87px] w-[75px] shrink-0">
      <Icon />
      {running && <i className="absolute bottom-[2px] left-[35.500px] size-[4px] rounded-full bg-[#02303a]" />}
    </div>
  ));
}

function Dock() {
  return (
    <nav className="absolute bottom-0 left-[492px] flex h-[87px] w-[1576px] rounded-t-[5px] bg-[linear-gradient(to_right,#62a5bd_0%,#62aec0_6%,#7be0a6_13.400%,#7adfa8_21.500%,#70cfb4_27%,#6a9cc5_33%,#699dc6_36%,#6bcab0_39.500%,#66bdba_50%,#6fd1ae_56.200%,#64a5c0_61.800%,#6296cb_65%,#629fc8_67%,#62a9c0_72%,#6292bd_77%,#6379b9_80%,#6670b9_100%)] pl-[4px] shadow-[0_0_44px_rgba(0,0,0,0.160),0_0_1px_rgba(0,0,0,0.400)]">
      <div className="absolute inset-0 rounded-t-[5px] bg-[linear-gradient(to_right,#5f9bb1_0%,#609fae_6%,#76cc9a_13.400%,#74c69d_21.500%,#6fc2a0_29.300%,#93c795_35%,#6ec19a_39.500%,#64adad_49.800%,#6dc19d_56.200%,#639ab0_61.800%,#62a3ac_66.500%,#61a2ac_71%,#6293ae_75.400%,#6378b0_79.800%,#636aa6_100%)] [mask-image:linear-gradient(to_bottom,black_5%,transparent_90%)]" />
      <DockGroup items={APPS} />
      <div className="relative flex w-[33.500px] items-center pl-[16.700px]">
        <i className="h-[43px] w-px bg-[#2b6b83]" />
      </div>
      <DockGroup items={TOOLS} />
      <div className="relative flex w-[34.500px] items-center pl-[18px]">
        <i className="h-[65px] w-px bg-[#2c3a80]" />
      </div>
      <DockGroup items={PLACES} />
    </nav>
  );
}

export default function App() {
  return (
    <div className="relative h-[1440px] w-[2560px] overflow-hidden bg-[#1b2344] font-['Inter',sans-serif] [zoom:1.6]">
      <Wallpaper />
      <MenuBar />
      <section className="relative mt-px rounded-[5px] shadow-[0_0_1px_rgba(0,0,0,0.500)]">
        <TabStrip />
        <Toolbar />
        <Page />
        <Shelf />
      </section>
      <Dock />
    </div>
  );
}
